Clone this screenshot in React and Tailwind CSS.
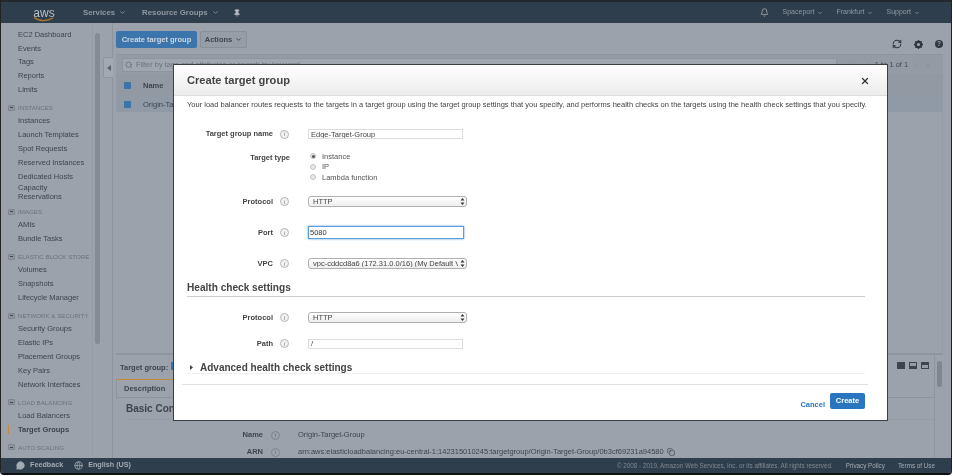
import { Bell, ChevronDown, ChevronLeft, ChevronRight, ChevronFirst, ChevronLast, RefreshCw, Search, Copy, Pin, Globe, MessageCircle, X } from 'lucide-react'

const FONT = { fontFamily: '"Liberation Sans", Arial, sans-serif' }

const NAV = [
  { items: ['EC2 Dashboard', 'Events', 'Tags', 'Reports', 'Limits'] },
  { title: 'INSTANCES', items: ['Instances', 'Launch Templates', 'Spot Requests', 'Reserved Instances', 'Dedicated Hosts', 'Capacity Reservations'] },
  { title: 'IMAGES', items: ['AMIs', 'Bundle Tasks'] },
  { title: 'ELASTIC BLOCK STORE', items: ['Volumes', 'Snapshots', 'Lifecycle Manager'] },
  { title: 'NETWORK & SECURITY', items: ['Security Groups', 'Elastic IPs', 'Placement Groups', 'Key Pairs', 'Network Interfaces'] },
  { title: 'LOAD BALANCING', items: ['Load Balancers', 'Target Groups'] },
  { title: 'AUTO SCALING', items: [] },
]

function InfoIcon() {
  return (
    <span className="flex h-[9px] w-[9px] items-center justify-center rounded-full border border-[#b5b5b5] bg-[#f2f2f2] text-[6px] leading-none text-[#777]">
      i
    </span>
  )
}

function Row({ label, height, top, children }) {
  return (
    <div className="flex shrink-0 items-center" style={{ height, marginTop: top }}>
      <div className="w-[86px] shrink-0 text-right text-[7.5px] font-bold text-[#444]">{label}</div>
      <div className="flex w-[35px] shrink-0 items-center pl-[7px]">
        <InfoIcon />
      </div>
      {children}
    </div>
  )
}

function SelectBox({ value }) {
  return (
    <div className="relative h-[11px] w-[159px]">
      <select
        defaultValue={value}
        className="block h-full w-full appearance-none rounded-[3px] border border-[#b0b0b0] bg-gradient-to-b from-white to-[#eee] pl-[4px] pr-[8px] text-[7.5px] leading-none text-[#444] outline-none"
      >
        <option>{value}</option>
      </select>
      <svg className="absolute right-[2px] top-[2px] h-[7px] w-[5px]" viewBox="0 0 5 7">
        <path d="M2.5 0 L4.5 2.6 H0.5 Z M2.5 7 L4.5 4.4 H0.5 Z" fill="#333" />
      </svg>
    </div>
  )
}

function Radio({ label, checked }) {
  return (
    <div className="flex h-[10.5px] items-center text-[7.5px] text-[#555]">
      <span className="flex h-[6px] w-[6px] items-center justify-center rounded-full border border-[#c4c4c4] bg-[#e6e6e6]">
        {checked && <span className="h-[3px] w-[3px] rounded-full bg-[#555]" />}
      </span>
      <span className="ml-[6px]">{label}</span>
    </div>
  )
}

function Sidebar() {
  return (
    <aside className="relative flex w-[112px] shrink-0 border-r border-[#8d949e]">
      <div className="w-[92px] shrink-0 overflow-hidden border-r border-[#959ca6] pt-[5px] text-[7.5px] text-[#3d444e]">
        {NAV.map((group, i) => (
          <div key={i} className={i > 0 ? 'mt-[3.3px]' : ''}>
            {group.title && (
              <div className="flex h-[14px] items-center pl-[7px] text-[6.2px] text-[#6b727d]">
                <span className="mr-[3px] flex h-[6px] w-[7px] shrink-0 items-center justify-center rounded-[1px] border border-[#7d848e] bg-[#8f96a0]">
                  <span className="h-px w-[3px] bg-[#444]" />
                </span>
                <span className="whitespace-nowrap">{group.title}</span>
              </div>
            )}
            {group.items.map((item) => {
              const active = item === 'Target Groups'
              return (
                <div
                  key={item}
                  className={`flex min-h-[13.9px] items-center pl-[17px] pr-[30px] leading-[8.5px] ${active ? 'relative font-bold' : ''} ${item === 'Capacity Reservations' ? '' : 'whitespace-nowrap'}`}
                >
                  {active && <span className="absolute left-[7px] top-[2px] h-[9px] w-px bg-[#c98a35]" />}
                  {item}
                </div>
              )
            })}
          </div>
        ))}
      </div>
      <div className="flex-1 pl-[2px] pt-[10px]">
        <div className="h-[311px] w-[5px] rounded-full bg-[#848b95]" />
      </div>
      <div className="absolute -right-px top-[34px] flex h-[21px] w-[10px] items-center justify-center rounded-l-[2px] border border-r-0 border-[#8d949e] bg-[#a3a9b2]">
        <svg className="h-[6px] w-[4px]" viewBox="0 0 4 6"><path d="M4 0 V6 L0 3 Z" fill="#5b626c" /></svg>
      </div>
    </aside>
  )
}

function Checkbox() {
  return <span className="h-[7px] w-[7px] rounded-[1px] bg-[#3a74aa]" />
}

function InfoIconDim() {
  return <span className="flex h-[9px] w-[9px] items-center justify-center rounded-full border border-[#7d848e] text-[6px] leading-none text-[#5b626c]">i</span>
}

function Main() {
  return (
    <main className="flex min-w-0 flex-1 flex-col pl-[3px] pr-[8px] text-[#3d444e]">
      <div className="flex h-[31px] shrink-0 items-start pt-[8px]">
        <button className="h-[17px] w-[81px] rounded-[2px] bg-[#3b75ab] text-[7.5px] font-bold text-[#cfd8e2]">Create target group</button>
        <button className="ml-[3px] flex h-[17px] w-[47px] items-center justify-center rounded-[2px] border border-[#8a9099] bg-[#979da6] text-[7.5px] font-bold text-[#3d444e]">
          Actions <ChevronDown size={7} strokeWidth={3} className="ml-[3px]" />
        </button>
        <div className="ml-auto flex items-center gap-[12px] self-end pb-[5px]">
          <RefreshCw size={10} strokeWidth={2.5} className="text-[#2f3640]" />
          <svg className="h-[9px] w-[9px]" viewBox="0 0 10 10">
            <circle cx="5" cy="5" r="3" fill="none" stroke="#2f3640" strokeWidth="2.4" />
            <path d="M5 0v2M5 8v2M0 5h2M8 5h2M1.5 1.5l1.4 1.4M7.1 7.1l1.4 1.4M8.5 1.5L7.1 2.9M2.9 7.1L1.5 8.5" stroke="#2f3640" strokeWidth="1.4" />
          </svg>
          <span className="flex h-[8px] w-[8px] items-center justify-center rounded-full bg-[#2f3640] text-[6.5px] font-bold leading-none text-[#9ca2ab]">?</span>
        </div>
      </div>
      <div className="flex h-[20px] shrink-0 items-center border-t border-[#8d949e] bg-[#959ba5] pl-[6px]">
        <div className="flex h-[14px] w-[715px] items-center rounded-[2px] border border-[#8d949e] bg-[#a0a6af] pl-[2px] text-[7.5px] text-[#6c737d]">
          <Search size={8} className="mr-[3px] text-[#5c636d]" />
          Filter by tags and attributes or search by keyword
        </div>
        <div className="ml-[3px] flex flex-1 items-center justify-center gap-[4px] text-[7.5px] text-[#444b55]">
          <ChevronFirst size={8} className="text-[#858c96]" />
          <ChevronLeft size={8} className="text-[#858c96]" />
          <span>1 to 1 of 1</span>
          <ChevronRight size={8} className="text-[#858c96]" />
          <ChevronLast size={8} className="text-[#858c96]" />
        </div>
      </div>
      <div className="flex h-[23px] shrink-0 items-center bg-[#9299a3] pl-[8px] text-[7.5px] font-bold">
        <Checkbox />
        <span className="ml-[12px]">Name</span>
      </div>
      <div className="flex h-[15px] shrink-0 items-center bg-[#8f9aa6] pl-[8px] text-[7.5px]">
        <Checkbox />
        <span className="ml-[12px]">Origin-Target-Group</span>
      </div>
      <div className="h-[241px] shrink-0 border-r border-[#959ca6]" />
      <div className="flex min-h-0 flex-1 border-t-2 border-[#8f96a0]">
        <div className="flex min-w-0 flex-1 flex-col overflow-hidden">
          <div className="flex h-[24px] shrink-0 items-start pl-[4px] pt-[7px] text-[7.5px] font-bold">
            Target group:
            <span className="ml-[3px] h-[8px] w-[3px] bg-[#3a74aa]" />
            <div className="ml-auto flex gap-[4px] pr-[5px]">
              <span className="h-[7px] w-[8px] border-b-[4px] border-[#3d444e] bg-[#3d444e]" />
              <span className="h-[7px] w-[8px] border-[1px] border-b-[3px] border-[#3d444e] bg-[#979da6]" />
              <span className="h-[7px] w-[8px] border-[1px] border-t-[3px] border-[#3d444e] bg-[#979da6]" />
            </div>
          </div>
          <div className="shrink-0 border-b border-[#8d949e]">
            <div className="h-[18px] w-[62px] border-l border-t border-t-[#c98a35] border-l-[#8d949e] pl-[7px] pt-[3px] text-[7.5px] font-bold">
              Description
            </div>
          </div>
          <div className="ml-[10px] mt-[3px] h-[19px] shrink-0 border-b border-[#959ca6] text-[10px] font-bold">Basic Configuration</div>
          <div className="mt-[7px] flex h-[16px] shrink-0 items-center text-[7.5px]">
            <span className="w-[147px] text-right font-bold">Name</span>
            <span className="ml-[8px] flex w-[27px]"><InfoIconDim /></span>
            <span>Origin-Target-Group</span>
          </div>
          <div className="flex h-[18px] shrink-0 items-center whitespace-nowrap text-[7.5px]">
            <span className="w-[147px] text-right font-bold">ARN</span>
            <span className="ml-[8px] flex w-[27px]"><InfoIconDim /></span>
            <span>arn:aws:elasticloadbalancing:eu-central-1:142315010245:targetgroup/Origin-Target-Group/0b3cf69231a94580</span>
            <Copy size={8} className="ml-[3px]" />
          </div>
        </div>
        <div className="w-[9px] shrink-0 border-l border-[#8d949e] pl-[2px] pt-[6px]">
          <div className="h-[26px] w-[5px] rounded-full bg-[#7f868f]" />
        </div>
      </div>
    </main>
  )
}

function Modal() {
  return (
    <div className="absolute left-[173px] top-[64px] flex h-[357px] w-[715px] flex-col border border-[#3a3f46] bg-white text-[#444]">
      <div className="flex h-[31px] shrink-0 items-center justify-between border-b border-[#ddd] bg-gradient-to-b from-white to-[#ececec] pl-[13px] pr-[17px] pt-[1px]">
        <h2 className="text-[11.1px] font-bold text-[#444]">Create target group</h2>
        <X size={10} strokeWidth={3} className="text-[#333]" />
      </div>
      <div className="flex min-h-0 flex-1 flex-col pl-[13px] pr-[22px]">
        <p className="flex h-[17px] shrink-0 items-center whitespace-nowrap text-[7.5px] text-[#444]">
          Your load balancer routes requests to the targets in a target group using the target group settings that you specify, and performs health checks on the targets using the health check settings that you specify.
        </p>
        <Row label="Target group name" height={10} top={16}>
          <input readOnly value="Edge-Target-Group" className="h-full w-[155px] border border-[#ddd] px-[2px] text-[7.5px] text-[#444] outline-none" />
        </Row>
        <div className="mt-[12px] flex h-[31.5px] shrink-0 items-start">
          <div className="w-[103px] shrink-0 pt-[1px] text-right text-[7.5px] font-bold">Target type</div>
          <div className="ml-[18px] pl-[2px]">
            <Radio label="Instance" checked />
            <Radio label="IP" />
            <Radio label="Lambda function" />
          </div>
        </div>
        <Row label="Protocol" height={11} top={13.5}><SelectBox value="HTTP" /></Row>
        <Row label="Port" height={13} top={19}>
          <input readOnly value="5080" className="h-full w-[156px] border border-[#5b9dd9] px-[1px] text-[7.5px] text-[#333] shadow-[0_0_2px_#5b9dd9] outline-none" />
        </Row>
        <Row label="VPC" height={11} top={19}>
          <SelectBox value="vpc-cddcd8a6 (172.31.0.0/16) (My Default VPC)" />
        </Row>
        <h3 className="mt-[12.5px] h-[15.5px] shrink-0 border-b border-[#ccc] text-[10.1px] font-bold leading-[12px]">Health check settings</h3>
        <Row label="Protocol" height={11} top={15}><SelectBox value="HTTP" /></Row>
        <Row label="Path" height={10} top={15.5}>
          <input readOnly value="/" className="h-full w-[155px] border border-[#ddd] px-[2px] text-[7.5px] text-[#444] outline-none" />
        </Row>
        <div className="mt-[13px] flex h-[12px] shrink-0 items-center border-b border-[#f0f0f0] text-[10px] font-bold">
          <svg className="ml-[3px] mr-[7px] h-[5px] w-[3px]" viewBox="0 0 3 5"><path d="M0 0 L3 2.5 L0 5 Z" fill="#444" /></svg>
          Advanced health check settings
        </div>
      </div>
      <div className="ml-[8px] mr-[19px] flex h-[36px] shrink-0 items-start justify-end border-t border-[#e0e0e0] pr-[3px] pt-[8px]">
        <button className="mr-[5px] mt-[6px] text-[7.5px] font-bold text-[#2a75c0]">Cancel</button>
        <button className="h-[16px] w-[35px] rounded-[2px] bg-[#2a75c0] text-[7.5px] font-bold text-white">Create</button>
      </div>
    </div>
  )
}

export default function App() {
  return (
    <div style={FONT} className="relative h-[476px] w-[953px] overflow-hidden bg-white blur-[0.4px]">
      <div className="flex h-[475px] w-[952px] flex-col overflow-hidden rounded-b-[4px] border-x border-b-2 border-x-[#222] border-b-[#111] bg-[#9ca2ab]">
        <header className="flex h-[23px] shrink-0 items-center border-t-2 border-[#23282f] bg-[#2f3e4c] text-[7.8px] font-bold text-[#8f99a3]">
          <div className="relative ml-[32px] w-[22px] text-center text-[12px] font-normal leading-[10px] text-[#b9bfc6]">
            aws
            <svg className="absolute left-0 top-[9px] h-[5px] w-[22px]" viewBox="0 0 22 5">
              <path d="M1 0.5 C6 4.5 14 4.5 20 1" fill="none" stroke="#b37a2e" strokeWidth="1.2" />
            </svg>
          </div>
          <span className="ml-[28px]">Services</span>
          <ChevronDown size={7} strokeWidth={3} className="ml-[4px]" />
          <span className="ml-[16px]">Resource Groups</span>
          <ChevronDown size={7} strokeWidth={3} className="ml-[4px]" />
          <Pin size={8} fill="currentColor" className="ml-[14px] text-[#b5bbc2]" />
          <div className="ml-auto flex items-center pr-[31px] text-[7px] font-normal">
            <Bell size={9} className="mr-[14px] text-[#aab1b8]" />
            <span>Spaceport</span>
            <ChevronDown size={6} strokeWidth={3} className="ml-[3px]" />
            <span className="ml-[13px]">Frankfurt</span>
            <ChevronDown size={6} strokeWidth={3} className="ml-[3px]" />
            <span className="ml-[13px]">Support</span>
            <ChevronDown size={6} strokeWidth={3} className="ml-[3px]" />
          </div>
        </header>
        <div className="flex min-h-0 flex-1">
          <Sidebar />
          <Main />
        </div>
        <footer className="flex h-[15px] shrink-0 items-center bg-[#2f3e4c] text-[7.2px] font-bold text-[#a3abb3]">
          <MessageCircle size={9} fill="currentColor" className="ml-[15px] mr-[5px]" />
          Feedback
          <Globe size={9} className="ml-[11px] mr-[5px]" />
          English (US)
          <div className="ml-auto flex items-center pr-[16px] text-[6.3px] font-normal text-[#7f8993]">
            <span>© 2008 - 2019, Amazon Web Services, Inc. or its affiliates. All rights reserved.</span>
            <span className="ml-[13px] text-[#a3abb3]">Privacy Policy</span>
            <span className="ml-[13px] text-[#a3abb3]">Terms of Use</span>
          </div>
        </footer>
      </div>
      <Modal />
    </div>
  )
}
